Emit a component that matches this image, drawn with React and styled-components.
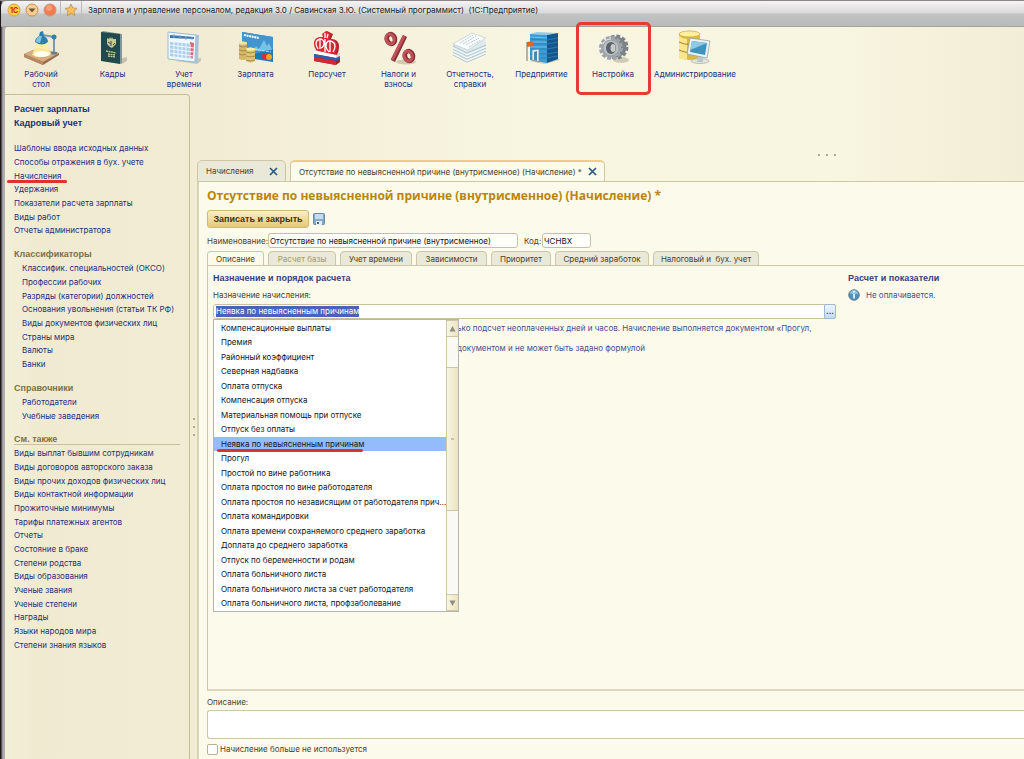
import React, { useEffect, useRef, useState } from "react";
import styled, { createGlobalStyle, css } from "styled-components";

const GlobalStyle = createGlobalStyle`
  * {
    box-sizing: border-box;
  }
  body {
    margin: 0;
    overflow: hidden;
    font-family: Inter, "Liberation Sans", sans-serif;
    font-size: 8px;
    line-height: 12px;
    color: #4a4228;
  }
  ul {
    list-style: none;
    margin: 0;
    padding: 0;
  }
  button, input, textarea {
    font: inherit;
    color: inherit;
  }
  a {
    color: #24307c;
    text-decoration: none;
  }
`;

const boldText = css`
  font-family: "Liberation Sans", Arial, sans-serif;
  font-size: 9px;
  font-weight: bold;
`;

const Window = styled.div`
  display: flex;
  flex-direction: column;
  min-height: 100vh;
  padding-left: 5px;
  border-top: 1px solid #8c8689;
  background: linear-gradient(90deg, #1d191b 0, #1d191b 1px, #8e8a8e 2px, #b9b6ba 4px, #a8a6a2 5px);
`;

const TitleBar = styled.header`
  display: flex;
  align-items: center;
  height: 26px;
  margin-left: -4px;
  padding: 0 0 7px 4px;
  border-bottom: 1px solid #a2a4a2;
  border-top-left-radius: 6px;
  background: linear-gradient(#f4f4f4, #d9d9d9 12px, #c1c2c2 13px, #b9baba 25px);
  color: #1c1c1c;
`;

const RoundButton = styled.button`
  display: flex;
  width: 18px;
  height: 14px;
  padding: 0;
  border: 0;
  background: none;
  justify-content: center;
`;

const Separator = styled.i`
  width: 1px;
  height: 19px;
  margin: 0 1px;
  background: #bcbcbc;
`;

const WindowTitle = styled.span`
  margin-left: 5px;
  white-space: pre;
`;

const Desk = styled.div`
  display: flex;
  flex: 1;
  flex-direction: column;
  border-top-left-radius: 3px;
  background: linear-gradient(90deg, #f4f0d8 0, #f0ead1 30px, #f2ecd5 200px, #f7f4df 480px, #f8f5e0 830px, #f2edd6 100%);
`;

const Sections = styled.nav`
  display: flex;
  height: 67px;
`;

const Section = styled.a`
  position: relative;
  display: flex;
  flex-direction: column;
  align-items: center;
  flex: none;
  width: ${props => (props.$wide ? "92px" : "72px")};
  padding-top: 3px;
  line-height: 10px;
  text-align: center;
  white-space: pre-line;

  &:nth-child(even) {
    width: ${props => (props.$wide ? "92px" : "71px")};
  }
  svg {
    margin-bottom: 3px;
  }
`;

const Frame = styled.i`
  position: absolute;
  top: -5px;
  left: -1px;
  width: 75px;
  height: 73px;
  border: 3px solid #e43c32;
  border-radius: 5px;
`;

const Body = styled.div`
  display: flex;
  flex: 1;
`;

const Sidebar = styled.aside`
  flex: none;
  width: 185px;
  padding: 7px 9px;
  border-top: 1px solid #c6bd95;
  border-right: 1px solid #c6bd95;
  border-top-right-radius: 4px;
`;

const LinkList = styled.ul`
  margin-bottom: 11px;
  padding-left: ${props => (props.$nested ? "8px" : "0")};
  ${props => props.$bold && boldText}

  li {
    position: relative;
    height: 14px;
    line-height: 14px;
    white-space: nowrap;
  }
  li:nth-child(3n) {
    height: 13px;
  }
`;

const GroupTitle = styled.h3`
  ${boldText}
  margin: 0;
  line-height: 13px;
  color: #7a7148;
  ${props =>
    props.$ruled &&
    css`
      line-height: 10px;
      margin-bottom: 1px;
      border-bottom: 1px solid #c9c09a;
    `}
`;

const Marker = styled.i`
  position: absolute;
  bottom: -1px;
  left: ${props => props.$left};
  width: ${props => props.$width};
  height: 3px;
  border-radius: 2px;
  background: #e2302c;
`;

const Splitter = styled.div`
  display: flex;
  flex: none;
  align-items: center;
  justify-content: center;
  gap: 6px;
  color: #b5ad88;
  ${props =>
    props.$vertical
      ? css`
          flex-direction: column;
          width: 7px;
        `
      : css`
          height: 66px;
          padding: 56px 0 0 432px;
        `}
  i {
    width: 2px;
    height: 2px;
    background: currentColor;
  }
`;

const Main = styled.main`
  display: flex;
  flex: 1;
  flex-direction: column;
  min-width: 0;
`;

const WindowTabs = styled.div`
  display: flex;
  gap: 4px;
  margin-bottom: -1px;
`;

const WindowTab = styled.div`
  display: flex;
  align-items: center;
  justify-content: space-between;
  height: 22px;
  width: ${props => (props.$active ? "315px" : "89px")};
  padding: 0 7px 0 8px;
  border: 1px solid #cdc7a6;
  border-bottom-color: ${props => (props.$active ? "#fcfaea" : "#cdc7a6")};
  border-top: ${props => (props.$active ? "2px solid #ecce8c" : "1px solid #cdc7a6")};
  border-radius: 5px 5px 0 0;
  background: ${props => (props.$active ? "#fcfaea" : "#eae8d8")};
  white-space: nowrap;
`;

const CloseButton = styled.button`
  display: flex;
  padding: 0;
  border: 0;
  background: none;
`;

const Form = styled.form`
  display: flex;
  flex: 1;
  flex-direction: column;
  padding: 5px 0 4px 8px;
  border-top: 1px solid #cdc7a6;
  border-left: 2px solid #d8d2b4;
  background: #fcfaea;
`;

const Title = styled.h1`
  margin: 0 0 6px;
  font: bold 12px/17px "Open Sans", sans-serif;
  color: #b8860b;
  white-space: nowrap;
`;

const Commands = styled.div`
  display: flex;
  align-items: center;
  gap: 4px;
  margin-bottom: 5px;
`;

const PrimaryButton = styled.button`
  ${boldText}
  width: 102px;
  height: 18px;
  padding: 0;
  border: 1px solid #d0b878;
  border-radius: 3px;
  background: linear-gradient(#fbeec8, #f0dca0 50%, #e6c778);
  color: #43350e;
  white-space: nowrap;
`;

const IconButton = styled.button`
  display: flex;
  padding: 0;
  border: 0;
  background: none;
`;

const FieldRow = styled.div`
  display: flex;
  align-items: center;
  margin-bottom: 3px;
`;

const FieldLabel = styled.label`
  flex: none;
  width: ${props => props.$width};
  white-space: nowrap;

  input + & {
    margin-left: 6px;
  }
`;

const TextInput = styled.input`
  width: ${props => props.$width};
  height: 15px;
  padding: 0 1px;
  border: 1px solid #c8c19e;
  border-radius: 3px;
  outline: 0;
  background: #fff;
  color: #111;
`;

const Tabs = styled.div`
  display: flex;
  gap: 4px;
  margin-bottom: -1px;
`;

const Tab = styled.button`
  width: ${props => props.$width}px;
  height: 15px;
  padding: 0;
  border: 1px solid #cdc7a6;
  border-bottom-color: ${props => (props.$active ? "#fcfaea" : "#cdc7a6")};
  border-top-color: ${props => (props.$active ? "#e8c47c" : "#cdc7a6")};
  border-radius: 4px 4px 0 0;
  background: ${props => (props.$active ? "#fcfaea" : "#eae8d8")};
  line-height: 12px;
  color: ${props => (props.disabled ? "#a8996c" : "#4a4228")};
  white-space: pre;
`;

const Page = styled.section`
  display: grid;
  grid-template-columns: 623px 1fr;
  column-gap: 12px;
  flex: 1;
  align-items: start;
  padding: 6px 0 0 5px;
  border: 1px solid #cdc7a6;
  border-right: 0;
  border-bottom: 2px solid #dcd7bc;
`;

const Subtitle = styled.h2`
  ${boldText}
  margin: 0 0 5px;
  line-height: 12px;
  color: #36407e;
`;

const Combo = styled.div`
  position: relative;
  display: flex;
  height: 15px;
  margin-top: 3px;
  border: 1px solid #c8c19e;
  border-radius: 3px;
  background: #fff;
`;

const ComboInput = styled.input`
  flex: 1;
  padding: 0 2px;
  border: 0;
  outline: 0;
  background: none;
  line-height: 11px;

  &::selection {
    background: #4b62bd;
    color: #fff;
  }
`;

const MoreButton = styled.button`
  width: 12px;
  margin: -1px;
  padding: 0;
  border: 1px solid #9cb8dc;
  border-radius: 2px;
  background: linear-gradient(#eef5fc, #c4dcf8);
  font-weight: bold;
  line-height: 11px;
  color: #222;
`;

const Popup = styled.div`
  position: absolute;
  z-index: 2;
  top: 14px;
  left: -1px;
  display: flex;
  width: 246px;
  border: 1px solid #b6b6b0;
  background: #fff;
  color: #15151c;
`;

const Options = styled.ul`
  flex: 1;
  min-width: 0;
  padding-top: 1px;
`;

const Option = styled.li`
  position: relative;
  height: 14px;
  padding-left: 7px;
  line-height: 14px;
  background: ${props => (props.$active ? "#94bbfb" : "transparent")};
  white-space: nowrap;

  &:nth-child(even) {
    height: 15px;
  }
`;

const ScrollBar = styled.div`
  display: grid;
  grid-template-rows: 17px 30fr 144fr 83fr 17px;
  width: 12px;
  border-left: 1px solid #cdc7a6;
  background: #faf9f4;
`;

const ScrollPart = styled.div`
  display: flex;
  align-items: center;
  justify-content: center;
  border: solid #cdc7a6;
  border-width: 1px 0;
  background: linear-gradient(90deg, #f8f5e0, #ebe4c2);
  grid-row: ${props => props.$row};

  i {
    width: 3px;
    height: 2px;
    background: #cbc49e;
  }
`;

const Note = styled.p`
  margin: 3px 0 0;
  padding-left: 244px;
  line-height: 12px;
  color: #45508e;
  white-space: nowrap;

  & + & {
    margin-top: 8px;
  }
`;

const Info = styled.p`
  display: flex;
  align-items: center;
  gap: 6px;
  margin: 0;
  color: #45508e;
`;

const CommentLabel = styled.label`
  margin: 5px 0 2px;
`;

const Comment = styled.textarea`
  display: block;
  height: 29px;
  border: 1px solid #cdc7a6;
  border-right: 0;
  border-radius: 3px 0 0 3px;
  outline: 0;
  resize: none;
  background: #fff;
`;

const CheckLabel = styled.label`
  display: flex;
  align-items: center;
  gap: 2px;
  margin-top: 4px;

  input {
    appearance: none;
    width: 11px;
    height: 11px;
    margin: 0;
    border: 1px solid #b8b190;
    border-radius: 2px;
    background: #fff;
  }
`;

const LampIcon = () => (
  <svg width="38" height="36" viewBox="0 0 38 36">
    <path d="M2 24 16 18 37 23 37 25 21 35 2 27Z" fill="#9a6b4e" />
    <path d="M2 24 16 18 37 23 21 32Z" fill="#d6ad80" />
    <path d="M2 24V27L21 35V32Z" fill="#b88860" />
    <path d="M14 14 10 25Q18 30 29 24L25 14Z" fill="#fff09a" opacity=".85" />
    <ellipse cx="20" cy="24" rx="8" ry="3" fill="#fffef0" />
    <path d="M32 7V23M32 7 21 5" fill="none" stroke="#7e9aaa" strokeWidth="2" />
    <path d="M18 2 21 1 22 6Q26 8 26 12 20 17 13 12 13 8 17 6Z" fill="#2d7fae" />
    <path d="M17 6Q14 8 14 12L18 13 20 6Z" fill="#82c3df" />
    <circle cx="32" cy="7" r="2.500" fill="#347fa8" />
    <ellipse cx="32" cy="23" rx="3" ry="1.500" fill="#5d8298" />
  </svg>
);

const PassportIcon = () => (
  <svg width="38" height="36" viewBox="0 0 38 36">
    <path d="M18 31 33 27V31L28 34Z" fill="#c6c2ac" />
    <path d="M7 2 9 1 28 4V33L26 34Z" fill="#81989a" />
    <path d="M7 2 26 4V34L7 31Z" fill="#214a4d" />
    <path d="m16 7 1 2 1-2 1 2 3 0v5l-3 3-1 1-2-1-3-3V8l2 1Z" fill="#c7c98f" />
    <path d="m14 12 3 2m4-1-2 2m-2-4v5" stroke="#365852" />
    <path d="m12 21 10 2m-8 1 7 1m-7 1 7 1" stroke="#c7c98f" strokeWidth="1.3" strokeDasharray="2 .5" />
  </svg>
);

const CalendarIcon = () => (
  <svg width="38" height="36" viewBox="0 0 38 36">
    <path d="M10 31 36 28V31L32 34Z" fill="#c9c6b3" />
    <path d="M3 2 34 5 33 33 3 29Z" fill="#a9c4d8" />
    <path d="M3 2 31 5 30 32 3 29Z" fill="#eff8ff" stroke="#9abcd6" />
    <path d="m5 5 24 2v2L5 8Z" fill="#3e78ad" />
    <path d="m5 12 24 2-1 15-23-3Z" fill="#a9d0ea" />
    <path d="m25 12 4 1-1 15-4-1Z" fill="#dc6974" />
    <path d="m5 15 24 3M5 19l24 3M5 23l24 3M9 12v15m4-14v14m4-14v15m4-15v16m4-15v15" stroke="#eff8ff" strokeWidth="1" />
    <path d="M9 4v4m6-3v4m6-3v4m6-3v3" stroke="#92a8b7" />
  </svg>
);

const CardIcon = () => (
  <svg width="38" height="36" viewBox="0 0 38 36">
    <path d="M5 2 36 7V32L5 27Z" fill="#2478b5" />
    <path d="M5 2 36 7V19L5 27Z" fill="#4096cd" />
    <path d="m16 21 3-5 3 3 5-9 3 6 2-3 3 7" fill="#7ac1e4" />
    <path d="m7 5 15 3" stroke="#fff" strokeWidth="2" strokeDasharray="2 .6" />
    <path d="m17 19 17 3" stroke="#c6e8f8" strokeDasharray="3 1" />
    <circle cx="28" cy="26" r="3" fill="#e52a26" />
    <circle cx="32" cy="27" r="3" fill="#f5a124" />
    <path d="M2 13q4-3 8 0v16q-4 2-8 0Z" fill="#d5b866" />
    <path d="M9 19q4-3 9 0v12q-4 3-9 0Z" fill="#dfc477" />
    <path d="M2 16q4 2 8 0M2 20q4 2 8 0M2 24q4 2 7 0M9 22q4 2 9 0M9 26q4 2 9 0M9 30q4 2 9 0" fill="none" stroke="#a98a43" />
    <ellipse cx="6" cy="13" rx="4" ry="1.600" fill="#f4e6a5" />
    <ellipse cx="13.500" cy="19" rx="4.500" ry="1.600" fill="#f8ecae" />
  </svg>
);

const FundIcon = () => (
  <svg width="38" height="36" viewBox="0 0 38 36">
    <path d="M19 1 25 4 23 9Q31 9 31 17 31 21 29 25L9 21Q6 17 6 13 7 6 15 7L15 4Z" fill="#b3202c" />
    <path d="M18 1 23 4 21 9Q29 9 29 16 29 20 27 24L9 21Q6 17 6 13 7 6 15 7L14 4Z" fill="#d92b36" />
    <path d="M17 3v5M20 4l-1 4M10 19Q8 16 8 13 9 9 13 9q3 1 3 4 0 4-3 5M17 9v13M21 22q-3-3-3-6 0-5 4-5 5 1 5 5 0 3-2 6M12 10v9m10-8v11" fill="none" stroke="#fff" strokeWidth="1.300" />
    <path d="M6 20 28 25 32 23V32L28 35 6 31Z" fill="#a81d28" />
    <path d="m6 20 22 5v3L6 24Z" fill="#fff" />
    <path d="m6 24 22 4 4-2v3l-4 2L6 27Z" fill="#2861ad" />
    <path d="m6 27 22 4v4L6 31Z" fill="#d32934" />
    <path d="m28 25 4-2v3l-4 2Z" fill="#d8d8dc" />
  </svg>
);

const PercentIcon = () => (
  <svg width="38" height="36" viewBox="0 0 38 36">
    <ellipse cx="26" cy="32" rx="10" ry="2.500" fill="#d2c9b0" />
    <g fill="none" stroke="#8a3038" strokeWidth="4.500">
      <ellipse cx="11" cy="9" rx="4" ry="5" transform="rotate(-20 11 9)" />
      <ellipse cx="29" cy="26" rx="4" ry="5" transform="rotate(-20 29 26)" />
      <path d="M25 6 13 31" />
    </g>
    <g fill="none" stroke="#c0525a" strokeWidth="3">
      <ellipse cx="10" cy="9" rx="4" ry="5" transform="rotate(-20 10 9)" />
      <ellipse cx="28" cy="26" rx="4" ry="5" transform="rotate(-20 28 26)" />
      <path d="M24 6 12 30" />
    </g>
  </svg>
);

const PapersIcon = () => (
  <svg width="38" height="36" viewBox="0 0 38 36">
    <path d="M2 14 17 6 35 11V24L16 33 2 25Z" fill="#dde9ea" />
    <path d="m2 25 14 7 19-8M2 22l14 7 19-8M2 19l14 7 19-8M2 16l14 7 19-8" fill="none" stroke="#9fbbc4" strokeWidth=".8" />
    <path d="m2 24 14 7 19-8M2 21l14 7 19-8M2 18l14 7 19-8" fill="none" stroke="#fff" strokeWidth=".8" />
    <path d="M2 14 21 3 35 8 17 20Z" fill="#fbffff" stroke="#b7cbd2" strokeWidth=".7" />
    <path d="m9 13 13-8m-10 9 13-8m-10 9 13-7m-10 9 12-7" stroke="#a8bcc6" strokeWidth=".9" strokeDasharray="2 .8" />
  </svg>
);

const BuildingIcon = () => (
  <svg width="38" height="36" viewBox="0 0 38 36">
    <path d="M6 31 22 34 37 30 32 27Z" fill="#cfccb6" />
    <path d="M7 4 14 2 35 3 24 5Z" fill="#94cbe9" />
    <path d="M7 4 24 5V33L7 30Z" fill="#3c9bd2" />
    <path d="M24 5 35 3v26l-11 4Z" fill="#14578e" />
    <path d="m7 9 17 1 11-2M7 14h17l11-2M7 19h17l11-2M7 24h17l11-2M7 28h17l11-2" fill="none" stroke="#2a7fb8" strokeWidth=".9" />
    <path d="m7 7 17 1M7 12h17M7 17h17" stroke="#7cc6ec" strokeWidth=".8" />
    <path d="m9 20 7-1v13l-7-2Z" fill="#dff0f8" stroke="#6f8790" strokeWidth=".7" />
    <path d="m11 22 3-1v10l-3-1Z" fill="#4d89ae" />
    <path d="M4 12v19" stroke="#77706a" />
    <path d="m4 12 6-1v5l-6 1Z" fill="#e66428" />
  </svg>
);

const GearIcon = () => (
  <svg width="38" height="36" viewBox="0 0 38 36">
    <ellipse cx="27" cy="30" rx="8" ry="3" fill="#cfccb6" />
    <circle cx="22" cy="17" r="10.500" fill="#7b8288" stroke="#7b8288" strokeWidth="4" strokeDasharray="3.600 1.900" />
    <circle cx="17" cy="18" r="10" fill="#a9aeb3" stroke="#9da4aa" strokeWidth="4" strokeDasharray="3.600 1.636" />
    <circle cx="17" cy="18" r="8" fill="#b9bec3" stroke="#8f969d" strokeWidth=".7" />
    <ellipse cx="17" cy="18" rx="5" ry="6" fill="#5a626a" />
    <ellipse cx="19" cy="18" rx="2.500" ry="4" fill="#c9ccca" />
    <path d="M9 14q2-5 8-5" fill="none" stroke="#eef0f1" />
  </svg>
);

const AdminIcon = () => (
  <svg width="38" height="36" viewBox="0 0 38 36">
    <path d="M3 4q10-5 21 0v24q-10 4-21 0Z" fill="#dabb41" />
    <path d="M3 6q4 3 8 3v21q-6-1-8-2Z" fill="#f8e78e" />
    <ellipse cx="13.500" cy="4" rx="10.500" ry="3" fill="#fff0a0" stroke="#c8a83e" strokeWidth=".7" />
    <path d="M3 12q10 5 21 0M3 20q10 5 21 0" fill="none" stroke="#a78427" />
    <ellipse cx="24" cy="31" rx="9" ry="2.500" fill="#e2e4de" stroke="#9aa3a5" strokeWidth=".6" />
    <path d="m22 25 5 1v6h-6Z" fill="#bdc7c8" />
    <path d="m14 8 20 3-3 17-20-4Z" fill="#eef2f2" stroke="#8b9b9e" strokeWidth=".7" />
    <path d="m16 11 15 2-2 12-15-3Z" fill="#3f93bf" />
    <path d="m16 11 15 2-17 7Z" fill="#8fcae2" />
  </svg>
);

const CloseIcon = () => (
  <svg width="9" height="9" viewBox="0 0 9 9">
    <path d="M1 1 8 8M8 1 1 8" stroke="#275b84" strokeWidth="1.7" />
  </svg>
);

const DiskIcon = () => (
  <svg width="12" height="12" viewBox="0 0 12 12">
    <rect x=".5" y=".5" width="11" height="11" rx="1" fill="#85a9c8" stroke="#6789a6" />
    <path d="M2 1h8v5H2Z" fill="#c4dcec" />
    <path d="M3 8h6v4H3Z" fill="#e5edf2" />
    <path d="M4 9h2v2H4Z" fill="#42627c" />
  </svg>
);

const InfoIcon = () => (
  <svg width="12" height="12" viewBox="0 0 12 12">
    <circle cx="6" cy="6" r="5.300" fill="#4f91bd" stroke="#63839a" />
    <path d="M2 5q1-4 4-4t4 4Z" fill="#8cc0e0" />
    <path d="M6 2v1.500M6 5v4.500" stroke="#fff" strokeWidth="1.600" />
  </svg>
);

const Arrow = ({ down }) => (
  <svg width="7" height="6" viewBox="0 0 7 6">
    <path d={down ? "M.5.5h6L3.500 6Z" : "M.5 5.500h6L3.500 0Z"} fill="#8f8c80" />
  </svg>
);

const sections = [
  ["Рабочий\nстол", LampIcon],
  ["Кадры", PassportIcon],
  ["Учет\nвремени", CalendarIcon],
  ["Зарплата", CardIcon],
  ["Персучет", FundIcon],
  ["Налоги и\nвзносы", PercentIcon],
  ["Отчетность,\nсправки", PapersIcon],
  ["Предприятие", BuildingIcon],
  ["Настройка", GearIcon],
  ["Администрирование", AdminIcon]
];

const common = [
  "Шаблоны ввода исходных данных",
  "Способы отражения в бух. учете",
  "Начисления",
  "Удержания",
  "Показатели расчета зарплаты",
  "Виды работ",
  "Отчеты администратора"
];

const classifiers = [
  "Классифик. специальностей (ОКСО)",
  "Профессии рабочих",
  "Разряды (категории) должностей",
  "Основания увольнения (статьи ТК РФ)",
  "Виды документов физических лиц",
  "Страны мира",
  "Валюты",
  "Банки"
];

const seeAlso = [
  "Виды выплат бывшим сотрудникам",
  "Виды договоров авторского заказа",
  "Виды прочих доходов физических лиц",
  "Виды контактной информации",
  "Прожиточные минимумы",
  "Тарифы платежных агентов",
  "Отчеты",
  "Состояние в браке",
  "Степени родства",
  "Виды образования",
  "Ученые звания",
  "Ученые степени",
  "Награды",
  "Языки народов мира",
  "Степени знания языков"
];

const tabs = [
  ["Описание", 57],
  ["Расчет базы", 68],
  ["Учет времени", 72],
  ["Зависимости", 71],
  ["Приоритет", 60],
  ["Средний заработок", 94],
  ["Налоговый и  бух. учет", 106]
];

const purposes = [
  "Компенсационные выплаты",
  "Премия",
  "Районный коэффициент",
  "Северная надбавка",
  "Оплата отпуска",
  "Компенсация отпуска",
  "Материальная помощь при отпуске",
  "Отпуск без оплаты",
  "Неявка по невыясненным причинам",
  "Прогул",
  "Простой по вине работника",
  "Оплата простоя по вине работодателя",
  "Оплата простоя по независящим от работодателя прич...",
  "Оплата командировки",
  "Оплата времени сохраняемого среднего заработка",
  "Доплата до среднего заработка",
  "Отпуск по беременности и родам",
  "Оплата больничного листа",
  "Оплата больничного листа за счет работодателя",
  "Оплата больничного листа, профзаболевание"
];

const Links = ({ items, marked, ...rest }) => (
  <LinkList {...rest}>
    {items.map(item => (
      <li key={item}>
        <a href="#">{item}</a>
        {item === marked && <Marker $left="-7px" $width="60px" />}
      </li>
    ))}
  </LinkList>
);

const App = () => {
  const [purpose, setPurpose] = useState("Неявка по невыясненным причинам");
  const purposeRef = useRef(null);

  useEffect(() => {
    purposeRef.current.focus();
    purposeRef.current.select();
  }, []);

  return (
    <>
      <GlobalStyle />
      <Window>
        <TitleBar>
          <RoundButton aria-label="Главное меню">
            <svg width="14" height="14" viewBox="0 0 14 14">
              <circle cx="7" cy="7" r="6" fill="#f9d33a" stroke="#d9a43a" />
              <text x="7" y="9.500" textAnchor="middle" fontSize="7" fontWeight="bold" fill="#d3201c">1С</text>
            </svg>
          </RoundButton>
          <RoundButton aria-label="Меню функций">
            <svg width="14" height="14" viewBox="0 0 14 14">
              <circle cx="7" cy="7" r="6" fill="#f8ce93" stroke="#c5914d" />
              <path d="M3.500 5.500h7L7 9.500Z" fill="#6d5334" />
            </svg>
          </RoundButton>
          <RoundButton aria-label="Закрыть">
            <svg width="14" height="14" viewBox="0 0 14 14">
              <circle cx="7" cy="7" r="6" fill="#f47a52" stroke="#c79878" />
              <circle cx="6" cy="5" r="3" fill="#fa9c76" />
            </svg>
          </RoundButton>
          <Separator />
          <RoundButton aria-label="Избранное">
            <svg width="14" height="14" viewBox="0 0 14 14">
              <path d="m7 1 1.800 3.900 4.200.5-3.100 2.900.9 4.200L7 10.400l-3.800 2.100.9-4.200L1 5.400l4.200-.5Z" fill="#fac25d" stroke="#b98a50" strokeWidth=".8" />
            </svg>
          </RoundButton>
          <Separator />
          <WindowTitle>
            {"Зарплата и управление персоналом, редакция 3.0 / Савинская З.Ю. (Системный программист)  (1С:Предприятие)"}
          </WindowTitle>
        </TitleBar>
        <Desk>
          <Sections>
            {sections.map(([title, Icon]) => (
              <Section key={title} href="#" $wide={title === "Администрирование"}>
                <Icon />
                {title}
                {title === "Настройка" && <Frame />}
              </Section>
            ))}
          </Sections>
          <Body>
            <Sidebar>
              <Links items={["Расчет зарплаты", "Кадровый учет"]} $bold />
              <Links items={common} marked="Начисления" />
              <GroupTitle>Классификаторы</GroupTitle>
              <Links items={classifiers} $nested />
              <GroupTitle>Справочники</GroupTitle>
              <Links items={["Работодатели", "Учебные заведения"]} $nested />
              <GroupTitle $ruled>См. также</GroupTitle>
              <Links items={seeAlso} />
            </Sidebar>
            <Splitter $vertical>
              <i />
              <i />
              <i />
            </Splitter>
            <Main>
              <Splitter>
                <i />
                <i />
                <i />
              </Splitter>
              <WindowTabs>
                <WindowTab>
                  Начисления
                  <CloseButton aria-label="Закрыть">
                    <CloseIcon />
                  </CloseButton>
                </WindowTab>
                <WindowTab $active>
                  Отсутствие по невыясненной причине (внутрисменное) (Начисление) *
                  <CloseButton aria-label="Закрыть">
                    <CloseIcon />
                  </CloseButton>
                </WindowTab>
              </WindowTabs>
              <Form>
                <Title>Отсутствие по невыясненной причине (внутрисменное) (Начисление) *</Title>
                <Commands>
                  <PrimaryButton type="button">Записать и закрыть</PrimaryButton>
                  <IconButton type="button" aria-label="Записать">
                    <DiskIcon />
                  </IconButton>
                </Commands>
                <FieldRow>
                  <FieldLabel htmlFor="name" $width="61px">Наименование:</FieldLabel>
                  <TextInput id="name" $width="250px" defaultValue="Отсутствие по невыясненной причине (внутрисменное)" />
                  <FieldLabel htmlFor="code" $width="18px">Код:</FieldLabel>
                  <TextInput id="code" $width="49px" defaultValue="ЧСНВХ" />
                </FieldRow>
                <Tabs>
                  {tabs.map(([name, width], i) => (
                    <Tab key={name} type="button" $width={width} $active={i === 0} disabled={i === 1}>
                      {name}
                    </Tab>
                  ))}
                </Tabs>
                <Page>
                  <div>
                    <Subtitle>Назначение и порядок расчета</Subtitle>
                    <label htmlFor="purpose">Назначение начисления:</label>
                    <Combo>
                      <ComboInput
                        id="purpose"
                        ref={purposeRef}
                        value={purpose}
                        onChange={e => setPurpose(e.target.value)}
                      />
                      <MoreButton type="button">...</MoreButton>
                      <Popup>
                        <Options role="listbox">
                          {purposes.map(item => (
                            <Option
                              key={item}
                              role="option"
                              aria-selected={item === purpose}
                              $active={item === purpose}
                              onClick={() => setPurpose(item)}
                            >
                              {item}
                              {item === purpose && <Marker $left="3px" $width="146px" />}
                            </Option>
                          ))}
                        </Options>
                        <ScrollBar>
                          <ScrollPart $row={1}>
                            <Arrow />
                          </ScrollPart>
                          <ScrollPart $row={3}>
                            <i />
                          </ScrollPart>
                          <ScrollPart $row={5}>
                            <Arrow down />
                          </ScrollPart>
                        </ScrollBar>
                      </Popup>
                    </Combo>
                    <Note>ько подсчет неоплаченных дней и часов. Начисление выполняется документом «Прогул,</Note>
                    <Note>документом и не может быть задано формулой</Note>
                  </div>
                  <div>
                    <Subtitle>Расчет и показатели</Subtitle>
                    <Info>
                      <InfoIcon />
                      Не оплачивается.
                    </Info>
                  </div>
                </Page>
                <CommentLabel htmlFor="comment">Описание:</CommentLabel>
                <Comment id="comment" />
                <CheckLabel>
                  <input type="checkbox" />
                  Начисление больше не используется
                </CheckLabel>
              </Form>
            </Main>
          </Body>
        </Desk>
      </Window>
    </>
  );
};

export default App;
